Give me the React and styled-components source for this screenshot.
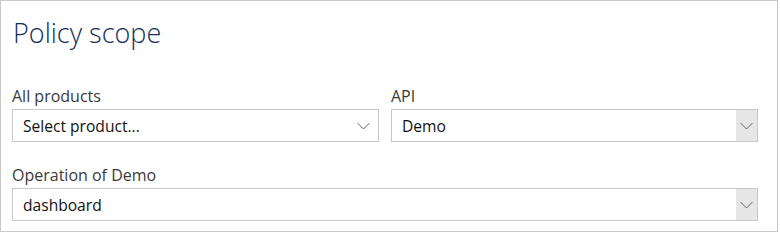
import React from 'react'
import styled, { createGlobalStyle } from 'styled-components'

const Global = createGlobalStyle`
  html, body {
    margin: 0;
    padding: 0;
    background: #fff;
  }
  body {
    font-family: "Open Sans", "Noto Sans", sans-serif;
  }
`

const Panel = styled.section`
  box-sizing: border-box;
  width: 778px;
  height: 232px;
  border: 1px solid #c8c8c8;
  padding: 13px 19px 0 11px;
`

const Title = styled.h2`
  margin: 0 0 0 1px;
  font-weight: 300;
  font-size: 27px;
  line-height: 38px;
  color: #132f5c;
`

const Row = styled.div`
  display: grid;
  grid-template-columns: ${p => p.$cols || '1fr'};
  column-gap: 12px;
  margin-top: ${p => p.$top || 0}px;
`

const Field = styled.div`
  display: flex;
  flex-direction: column;
`

const Label = styled.label`
  font-size: 16px;
  line-height: 21px;
  color: #3a3a3a;
  margin-bottom: 2px;
`

const Select = styled.div`
  box-sizing: border-box;
  height: 33px;
  border: 1px solid #c8c8c8;
  display: flex;
  align-items: stretch;
  background: #fff;
`

const Value = styled.span`
  flex: 1;
  display: flex;
  align-items: center;
  padding-left: 10px;
  font-size: 15.6px;
  color: #111;
`

const Arrow = styled.span`
  width: 21px;
  display: flex;
  align-items: center;
  justify-content: center;
  background: ${p => (p.$filled ? '#e6e6e6' : 'transparent')};
  margin-right: ${p => (p.$filled ? 0 : 4)}px;
`

const Chevron = () => (
  <svg width="13" height="8" viewBox="0 0 13 8">
    <path d="M0.5 1 L6.5 7 L12.5 1" fill="none" stroke="#666" strokeWidth="1" />
  </svg>
)

const Dropdown = ({ label, value, filled }) => (
  <Field>
    <Label>{label}</Label>
    <Select>
      <Value>{value}</Value>
      <Arrow $filled={filled}>
        <Chevron />
      </Arrow>
    </Select>
  </Field>
)

export default function App() {
  return (
    <>
      <Global />
      <Panel>
        <Title>Policy scope</Title>
        <Row $cols="1fr 1fr" $top={34}>
          <Dropdown label="All products" value="Select product..." />
          <Dropdown label="API" value="Demo" filled />
        </Row>
        <Row $top={23}>
          <Dropdown label="Operation of Demo" value="dashboard" filled />
        </Row>
      </Panel>
    </>
  )
}
